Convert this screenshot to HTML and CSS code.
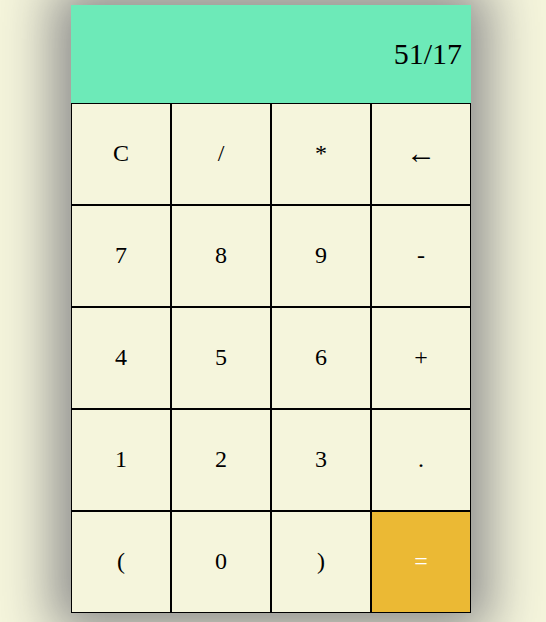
FILE: index.html
```html
<!DOCTYPE html>
<html>
<head>
<meta charset="utf-8">
<link rel="stylesheet" href="styles.css">
</head>
<body>
<div class="calc">
  <div class="display">51/17</div>
  <div class="keys">
    <button class="key">C</button>
    <button class="key">/</button>
    <button class="key">*</button>
    <button class="key arrow">&larr;</button>
    <button class="key">7</button>
    <button class="key">8</button>
    <button class="key">9</button>
    <button class="key">-</button>
    <button class="key">4</button>
    <button class="key">5</button>
    <button class="key">6</button>
    <button class="key">+</button>
    <button class="key">1</button>
    <button class="key">2</button>
    <button class="key">3</button>
    <button class="key">.</button>
    <button class="key">(</button>
    <button class="key">0</button>
    <button class="key">)</button>
    <button class="key equals">=</button>
  </div>
</div>
</body>
</html>
```
FILE: styles.css
```css
html {
  overflow: hidden;
  background: #f5f5dc;
}
body {
  margin: 0;
  padding: 5px 0 40px 71px;
  font-family: "Liberation Serif", "Times New Roman", serif;
}
.calc {
  width: 400px;
  box-shadow: 0 0 50px 18px #8c8c8c;
}
.display {
  height: 98px;
  background: #6deab8;
  display: flex;
  align-items: center;
  justify-content: flex-end;
  padding-right: 9px;
  font-size: 30px;
  color: #000;
  box-sizing: border-box;
}
.keys {
  display: grid;
  grid-template-columns: repeat(4, 100px);
  grid-auto-rows: 102px;
}
.key {
  box-sizing: border-box;
  margin: 0;
  padding: 0 0 2px;
  border: 1px solid #000;
  background: #f5f5dc;
  font-family: "Liberation Serif", "Times New Roman", serif;
  font-size: 24px;
  color: #000;
}
.key.arrow {
  font-size: 30px;
}
.key.equals {
  background: #ebb934;
  color: #fff;
}
```
